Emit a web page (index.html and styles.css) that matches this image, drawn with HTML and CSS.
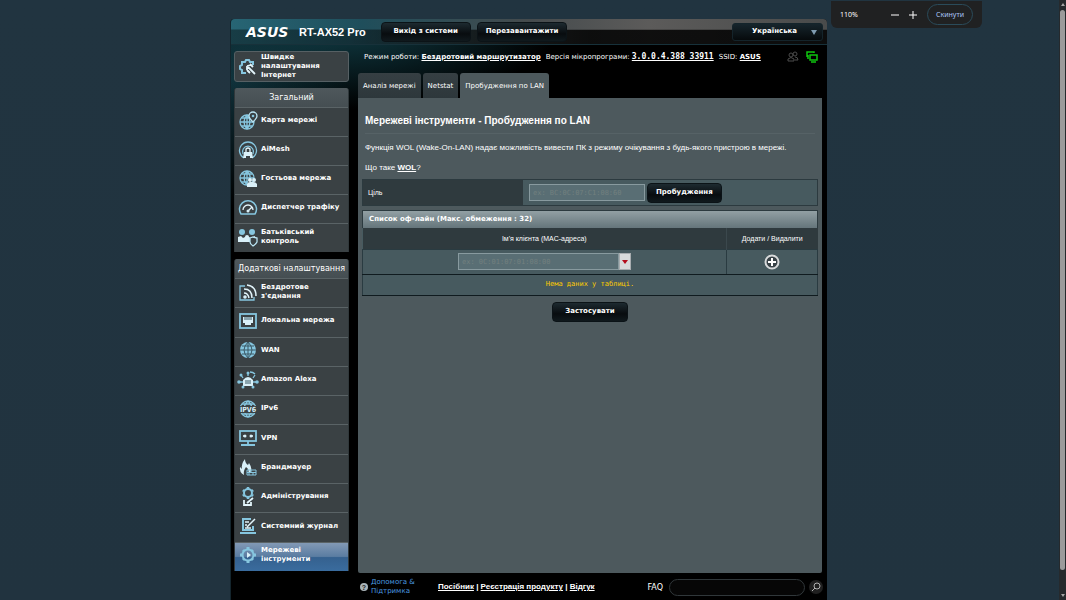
FILE: index.html
```html
<!DOCTYPE html>
<html lang="uk">
<head>
<meta charset="utf-8">
<title>ASUS RT-AX52 Pro - Пробудження по LAN</title>
<link rel="stylesheet" href="styles.css">
</head>
<body>
<div class="router">
  <header class="topbar">
    <svg class="logo" width="46" height="14" viewBox="0 0 46 14" role="img" aria-label="ASUS"><text x="1" y="12">ASUS</text></svg>
    <span class="model">RT-AX52 Pro</span>
    <button class="btn btn-top">Вихід з системи</button>
    <button class="btn btn-top">Перезавантажити</button>
    <span class="lang">
      <select aria-label="Мова"><option>Українська</option></select>
    </span>
  </header>

  <div class="columns">
    <nav class="sidebar">
      <a class="quick" href="#">
        <svg class="icon" viewBox="0 0 18 18"><path class="s" d="M14 7V4h-3L10 2H7L6 4H3v3L1 8v3l2 1v3h4" stroke-width="2"/><path class="w" d="M8 8l8 8M8 12l3 3M11 6l3 3M8 8l4-1M8 8v4" stroke-width="1.800"/></svg>
        <span>Швидке налаштування Інтернет</span>
      </a>
      <section class="group">
        <h2>Загальний</h2>
        <ul>
          <li><a href="#"><svg class="icon" viewBox="0 0 18 18"><circle class="s" cx="8" cy="10" r="7"/><path class="s" d="M1 10h14M8 3v14M3 6h10M3 14h10M8 3Q2 10 8 17M8 3q6 7 0 14"/><path class="pin" d="M14 10Q10 6 10 4a4 4 0 0 1 8 0q0 2-4 6z"/><circle class="f" cx="14" cy="4" r="1.300"/></svg><span>Карта мережі</span></a></li>
          <li><a href="#"><svg class="icon" viewBox="0 0 18 18"><path class="s" d="M5 17A8.500 8.500 0 1 1 13 17"/><path class="s" d="M4 13a5.500 5.500 0 1 1 10 0"/><path class="w" d="M7 11V8q2-2 4 0v3"/><path class="wf" d="M5 11h8l1 6h-3v-2H7v2H4z"/></svg><span>AiMesh</span></a></li>
          <li><a href="#"><svg class="icon" viewBox="0 0 18 18"><circle class="s" cx="8" cy="8" r="7"/><path class="s" d="M1 8h14M8 1v14M3 4h10M3 12h6M8 1Q2 8 8 15M8 1q5 5 2 10"/><path class="wf" d="M8 17v-3q1-2 3-2h3q3 0 4 2v3z"/><circle class="wf" cx="11" cy="10" r="2"/><circle class="wf" cx="15" cy="10" r="2"/></svg><span>Гостьова мережа</span></a></li>
          <li><a href="#"><svg class="icon" viewBox="0 0 18 18"><path class="s" d="M2 15A8.500 8.500 0 1 1 16 15z" stroke-width="1.500"/><path class="w" d="M4 11a5 5 0 0 1 10 0M9 12l4-4"/><circle class="wf" cx="9" cy="12" r="1.500"/></svg><span>Диспетчер трафіку</span></a></li>
          <li><a href="#"><svg class="icon" viewBox="0 0 18 18"><circle class="f" cx="3" cy="4" r="3"/><circle class="f" cx="13" cy="4" r="3"/><path class="wf" d="M-1 14V9l3-1 2 2 4-2 4 2 4-2v6z"/><circle class="wf" cx="8" cy="9" r="2"/><path class="pin" d="M11 10l3-1 4 1v4q-1 2-4 4-3-2-3-4z"/></svg><span>Батьківський контроль</span></a></li>
        </ul>
      </section>
      <section class="group">
        <h2>Додаткові налаштування</h2>
        <ul class="long">
          <li><a href="#"><svg class="icon" viewBox="0 0 18 18"><path class="s" d="M6 3H1v14h14v-3"/><path class="w" d="M5 6q8 0 8 9M5 10q4 0 5 5M8 2q9 1 9 11" stroke-width="1.500"/><circle class="wf" cx="6" cy="14" r="1.800"/></svg><span>Бездротове з'єднання</span></a></li>
          <li><a href="#"><svg class="icon" viewBox="0 0 18 18"><rect class="s" x="1" y="2" width="16" height="14" stroke-width="1.800"/><path class="wf" d="M4 5h10v6h-2v2H6v-2H4z"/><path class="d" d="M6 5v3M8 5v3M10 5v3M12 5v3"/></svg><span>Локальна мережа</span></a></li>
          <li><a href="#"><svg class="icon" viewBox="0 0 18 18"><circle class="f" cx="9" cy="9" r="8"/><path class="d" d="M1 9h16M9 1v16M3 5h12M3 13h12M9 1Q1 9 9 17M9 1q8 8 0 16"/></svg><span>WAN</span></a></li>
          <li><a href="#"><svg class="icon" viewBox="0 0 18 18"><path class="wf" d="M4 15V9q5-6 10 0v6z"/><path class="d" d="M6 10h6M6 12h6"/><path class="s" d="M9 5V2M4 7L2 4M14 7l2-3M4 11H0M14 11h4M11 1q3 0 5 2"/><circle class="f" cx="9" cy="2" r="1.500"/><circle class="f" cx="2" cy="4" r="1.500"/><circle class="f" cx="0" cy="11" r="1.800"/><circle class="f" cx="18" cy="11" r="1.800"/><circle class="f" cx="4" cy="16" r="1.500"/><circle class="f" cx="14" cy="16" r="1.500"/></svg><span>Amazon Alexa</span></a></li>
          <li><a href="#"><svg class="icon" viewBox="0 0 18 18"><circle class="s" cx="9" cy="9" r="8"/><path class="s" d="M3 4h12M3 14h12M9 1Q1 9 9 17M9 1q8 8 0 16"/><rect class="plate" y="6" width="18" height="7"/><text class="tag" x="9" y="12">IPV6</text></svg><span>IPv6</span></a></li>
          <li><a href="#"><svg class="icon" viewBox="0 0 18 18"><rect class="s" x="1" y="2" width="16" height="10" stroke-width="1.800"/><path class="s" d="M9 12v4M2 16h14" stroke-width="1.800"/><path class="w" d="M4 7h3M11 7h3"/><circle class="wf" cx="6" cy="7" r="1.500"/><circle class="wf" cx="12" cy="7" r="1.500"/></svg><span>VPN</span></a></li>
          <li><a href="#"><svg class="icon" viewBox="0 0 18 18"><path class="wf" d="M5 17Q0 14 1 9q1 1 2 2Q2 6 6 1q0 4 3 6l1-2q4 6 1 10H9q2-3-2-6-3 4-2 8z"/><path class="s" d="M8 12h9v5H8zM8 14.500h9M12 12v2.500M10 15v2M14 15v2" stroke-width="1"/></svg><span>Брандмауер</span></a></li>
          <li><a href="#"><svg class="icon" viewBox="0 0 18 18"><circle class="s" cx="9" cy="5" r="4" stroke-width="2"/><path class="s" d="M9-1v2M9 9v2M4 2l1 1M14 2l-1 1M4 8l1-1M14 8l-1-1" stroke-width="2.500"/><path class="w" d="M5 12v5h7v-3M8 15l6-5" stroke-width="1.800"/></svg><span>Адміністрування</span></a></li>
          <li><a href="#"><svg class="icon" viewBox="0 0 18 18"><path class="s" d="M12 2H4v11h10V9M1 16h16" stroke-width="2"/><path class="w" d="M8 10l8-8M6 5h4M6 8h2M6 11h6" stroke-width="1.500"/></svg><span>Системний журнал</span></a></li>
          <li class="active"><a href="#"><svg class="icon" viewBox="0 0 18 18"><circle class="s" cx="9" cy="9" r="5.500" stroke-width="2"/><path class="s" d="M9 1v3M9 14v3M1 9h3M14 9h3M4 4l1 1M14 4l-1 1M4 14l1-1M14 14l-1-1" stroke-width="3"/><path class="wf" d="M8 6l4 3-4 3z"/></svg><span>Мережеві інструменти</span></a></li>
        </ul>
      </section>
    </nav>

    <main class="content">
      <div class="status">
        <span>Режим роботи: <a href="#">Бездротовий маршрутизатор</a></span>
        <span>Версія мікропрограми: <a class="version" href="#">3.0.0.4.388_33911</a></span>
        <span>SSID: <a href="#">ASUS</a></span>
        <span class="status-icons">
          <svg width="12" height="12" viewBox="0 0 12 12"><g class="dim"><circle cx="4" cy="4" r="2"/><circle cx="8" cy="3" r="2"/><path d="M1 10V8q3-3 6 0v2zM8 6q3 0 3 3H8"/></g></svg>
          <svg width="12" height="12" viewBox="0 0 12 12"><path class="green" d="M4 4h7v5H4zM5 11h5M2 8V4M1 6V1h7v1"/></svg>
        </span>
      </div>
      <div class="tabs">
        <a href="#">Аналіз мережі</a>
        <a href="#">Netstat</a>
        <a class="current" href="#">Пробудження по LAN</a>
      </div>
      <div class="panel">
        <h1>Мережеві інструменти - Пробудження по LAN</h1>
        <p>Функція WOL (Wake-On-LAN) надає можливість вивести ПК з режиму очікування з будь-якого пристрою в мережі.</p>
        <p class="hint">Що таке <a href="#">WOL</a>?</p>
        <div class="target">
          <label for="target">Ціль</label>
          <div class="target-value">
            <input class="mac" id="target" type="text" placeholder="ex: BC:0C:07:C1:08:60">
            <button class="btn">Пробудження</button>
          </div>
        </div>
        <table class="clients">
          <caption>Список оф-лайн (Макс. обмеження : 32)</caption>
          <thead>
            <tr><th><label for="client">Ім'я клієнта (MAC-адреса)</label></th><th class="action">Додати / Видалити</th></tr>
          </thead>
          <tbody>
            <tr>
              <td><span class="combo"><input class="mac" id="client" type="text" placeholder="ex: 0C:01:07:01:08:00"><button class="arrow" aria-label="Показати клієнтів"></button></span></td>
              <td><button class="add" aria-label="Додати"><svg width="16" height="16" viewBox="0 0 16 16"><circle cx="8" cy="8" r="6.500"/><path d="M8 4v8M4 8h8"/></svg></button></td>
            </tr>
            <tr class="empty"><td colspan="2">Нема даних у таблиці.</td></tr>
          </tbody>
        </table>
        <button class="btn apply">Застосувати</button>
      </div>
    </main>
  </div>

  <footer class="footer">
    <svg class="help-icon" width="8" height="8" viewBox="0 0 8 8"><circle cx="4" cy="4" r="4"/><text x="4" y="6.500">?</text></svg>
    <a class="help" href="#">Допомога &amp; Підтримка</a>
    <span class="links"><a href="#">Посібник</a> | <a href="#">Реєстрація продукту</a> | <a href="#">Відгук</a></span>
    <label for="faq">FAQ</label>
    <input id="faq" type="text">
    <button class="search" aria-label="Пошук"><svg width="14" height="14" viewBox="0 0 14 14"><circle cx="8" cy="6" r="3"/><path d="M6 8l-3 3"/></svg></button>
  </footer>
</div>

<div class="zoom">
  <span class="zoom-level">110%</span>
  <button aria-label="Зменшити"><svg width="8" height="8" viewBox="0 0 8 8"><path d="M0 4h8"/></svg></button>
  <button aria-label="Збільшити"><svg width="8" height="8" viewBox="0 0 8 8"><path d="M0 4h8M4 0v8"/></svg></button>
  <button class="reset">Скинути</button>
</div>
<div class="scrollbar"><i class="up"></i><i class="thumb"></i><i class="down"></i></div>
</body>
</html>
```
FILE: styles.css
```css
* { box-sizing: border-box; }
html { background: #21333f; }
body {
  margin: 0;
  min-height: 100vh;
  padding: 19px 9px 0 0;
  display: flex;
  justify-content: center;
  background: linear-gradient(#213440, #21333f);
  color: #fff;
  font: 7px/9px "DejaVu Sans", sans-serif;
}
a { color: inherit; }
button, input, select { font: inherit; color: inherit; margin: 0; }
button { cursor: pointer; }
h1, h2, p, ul { margin: 0; padding: 0; }

.router {
  width: 100%;
  max-width: 597px;
  display: flex;
  flex-direction: column;
  border-left: 1px solid #14252d;
  border-radius: 4px 4px 0 0;
  background:
    radial-gradient(ellipse 220px 90px at 110px 0, #12414b, #12414b00),
    radial-gradient(ellipse 120px 130px at 0 60px, #103039, #10303900),
    #000;
}

.topbar {
  display: flex;
  align-items: center;
  height: 26px;
  padding: 0 4px 0 14px;
  border-bottom: 1px solid #17313a;
  border-radius: 4px 4px 0 0;
  background:
    linear-gradient(90deg, #0000 20%, #000b 60%) 0 11px no-repeat,
    linear-gradient(#0000 10px, #0006 11px),
    linear-gradient(90deg, #276574, #1f4e5b 22%, #454b4d 50%, #5c5b5a 70%, #494b4b);
}
.logo text { font: italic bold 14px "DejaVu Sans", sans-serif; fill: #fff; }
.model { margin: 0 15px 0 8px; font: bold 11px/14px "Liberation Sans", sans-serif; white-space: nowrap; }
.btn {
  height: 20px;
  padding: 0 8px;
  border: 1px solid #0b1317;
  border-radius: 4px;
  background: linear-gradient(#1d2a30, #080c0f 60%, #10191d);
  font-weight: bold;
  white-space: nowrap;
}
.btn-top { margin-right: 6px; min-width: 90px; }
.lang { position: relative; margin-left: auto; width: 91px; }
.lang select {
  width: 100%;
  height: 18px;
  padding: 0 14px 0 8px;
  border: 1px solid #14242b;
  border-radius: 3px;
  appearance: none;
  background: linear-gradient(#16252c, #060a0c);
  font-weight: bold;
  text-align-last: center;
}
.lang::after {
  content: "";
  position: absolute;
  right: 6px;
  top: 7px;
  border: 3px solid transparent;
  border-top: 5px solid #7f9bb0;
  border-bottom: 0;
}

.columns { display: flex; gap: 9px; padding: 0 5px 0 3px; }
.sidebar { flex: 0 0 115px; min-width: 0; padding-top: 6px; font-weight: bold; }
.sidebar a { display: flex; align-items: center; gap: 4px; padding: 0 2px 3px 4px; text-decoration: none; }
.sidebar a span { flex: 1; min-width: 0; }
.sidebar .quick {
  height: 31px;
  padding-bottom: 0;
  border: 1px solid #566064;
  border-radius: 3px;
  background: #3a4144;
}
.group { margin-top: 6px; border-radius: 3px 3px 0 0; overflow: hidden; background: #3a4144; border: 1px solid #30383b; border-width: 0 1px; }
.group + .group { margin-top: 7px; }
.group h2 { height: 19px; background: linear-gradient(#4f585c, #454e52); font-size: 8px; line-height: 20px; font-weight: normal; text-align: center; white-space: nowrap; }
.group ul { list-style: none; display: grid; grid-auto-rows: 1fr; min-height: 145px; }
.group .long { min-height: 293px; }
.group li { display: grid; border-top: 1px solid #5a6366; }
.group .active { background: linear-gradient(#8299b5, #5b7da2 48%, #35618f 52%, #3a6c9e); }
.icon { flex: none; width: 18px; height: 18px; overflow: visible; stroke-width: 1.300; }
.s, .w, .d { fill: none; stroke: #86c6df; }
.w { stroke: #e2f4fa; }
.d { stroke: #3b5965; stroke-width: 1; }
.f { fill: #86c6df; }
.wf { fill: #d9f0f8; }
.pin { fill: #3a4144; stroke: #b9e4f3; }
.plate { fill: #3a4144; }
.tag { font: bold 7px "DejaVu Sans Condensed", "DejaVu Sans", sans-serif; fill: #d9f0f8; text-anchor: middle; }

.content { flex: 1; min-width: 0; display: flex; flex-direction: column; }
.status { display: flex; align-items: center; gap: 5px; height: 28px; padding: 0 4px 4px 6px; white-space: nowrap; }
.status a { font-weight: bold; }
.status .version { font-family: "DejaVu Sans Mono", monospace; font-size: 8px; }
.status-icons { margin-left: auto; display: flex; gap: 7px; }
.dim { fill: none; stroke: #4c4c4c; }
.green { fill: none; stroke: #0fc50f; stroke-width: 1.500; }
.tabs { display: flex; gap: 2px; height: 25px; }
.tabs a {
  padding: 0 5px;
  border-radius: 3px 3px 0 0;
  background: linear-gradient(#363f43, #2d373b);
  line-height: 27px;
  text-decoration: none;
  white-space: nowrap;
}
.tabs .current { background: #4d595d; }
.panel {
  flex: 1;
  display: flex;
  flex-direction: column;
  padding: 0 4px;
  border-radius: 0 0 2px 2px;
  background: #4d595d;
  font-family: "Liberation Sans", sans-serif;
}
.panel h1 { margin: 0 3px 9px; padding: 15px 0 5px; border-bottom: 1px solid #566266; font-size: 10px; line-height: 15px; }
.panel p { margin: 0 3px 10px; font-size: 8px; line-height: 10px; }
.panel .hint { margin-bottom: 6px; }
.panel p a { font-weight: bold; }
.target { display: grid; grid-template-columns: 160px 1fr; min-height: 27px; margin-bottom: 4px; border: 1px solid #2c3a3f; background: #475a5f; }
.target label { display: flex; align-items: center; padding-left: 5px; background: #2f3a3e; }
.target-value { display: flex; align-items: center; gap: 2px; padding-left: 6px; }
.mac {
  width: 116px;
  height: 17px;
  padding: 0 3px;
  border: 1px solid #889a9f;
  background: #596e74;
  font: 7px "DejaVu Sans Mono", monospace;
}
.mac::placeholder { color: #72807f; opacity: 1; }
.panel .btn { font-family: "DejaVu Sans", sans-serif; }

.clients { width: 100%; border-collapse: collapse; text-align: center; background: #475a5f; table-layout: fixed; }
.clients caption {
  height: 18px;
  padding-left: 6px;
  border: 1px solid #2c3a3f;
  border-bottom: 0;
  background: linear-gradient(#92a0a4, #65757b);
  font: bold 7px/17px "DejaVu Sans", sans-serif;
  text-align: left;
}
.clients th { height: 21px; padding: 0; background: #2f3a3e; font-weight: normal; }
.clients .action { width: 91px; border-left: 1px solid #3b484d; }
.clients td { height: 25px; padding: 0; border: 1px solid #2a3b41; border-bottom-color: #101b1f; }
.clients .empty td { height: 21px; color: #fc0; font-family: "DejaVu Sans Mono", monospace; }
.combo { display: inline-flex; vertical-align: middle; }
.combo .mac { width: 161px; }
.arrow { width: 12px; height: 17px; padding: 0; border: 1px solid #a8adb0; background: #d8dadb; display: grid; place-items: center; }
.arrow::after { content: ""; border: 3px solid transparent; border-top: 4px solid #b30c1c; border-bottom: 0; }
.add { display: inline-flex; padding: 0; border: 0; background: none; vertical-align: middle; }
.add circle { fill: #384247; stroke: #d7d9da; stroke-width: 2; }
.add path { fill: none; stroke: #fff; stroke-width: 2; }
.panel .apply { align-self: center; min-width: 76px; margin: 6px 0 251px; }

.footer { display: flex; align-items: center; height: 27px; padding: 2px 4px 0 129px; }
.help-icon circle { fill: #aab4b8; }
.help-icon text { font: bold 7px "Liberation Sans", sans-serif; fill: #222; text-anchor: middle; }
.help { width: 50px; margin: 0 17px 0 3px; color: #4b9be0; text-decoration: none; }
.links { font: bold 8px/10px "Liberation Sans", sans-serif; white-space: nowrap; }
.footer label { margin: 0 6px 0 auto; font-size: 8px; }
#faq { width: 136px; height: 17px; padding: 0 8px; border: 1px solid #30373a; border-radius: 9px; background: #060606; }
.search { display: flex; margin-left: 4px; padding: 0; border: 0; border-radius: 7px; background: #202020; }
.search svg { fill: none; stroke: #b0b0b0; }

.zoom {
  position: absolute;
  top: 1px;
  right: 84px;
  display: flex;
  align-items: center;
  width: 151px;
  height: 27px;
  padding: 0 9px;
  border-radius: 0 0 6px 6px;
  background: #202122;
  font: 7px/9px "Noto Sans", sans-serif;
}
.zoom-level { margin-right: auto; }
.zoom button { display: flex; padding: 0; border: 0; margin-right: 10px; background: none; }
.zoom svg { stroke: #fff; fill: none; }
.zoom .reset { margin: 0; height: 21px; align-items: center; justify-content: center; width: 46px; border: 1px solid #2a4b5a; border-radius: 11px; color: #a9c4f5; }
.scrollbar { position: fixed; inset: 0 0 0 auto; width: 7px; padding: 3px 1px; display: flex; flex-direction: column; align-items: center; gap: 4px; background: #262a2d; }
.thumb { flex: 1; width: 5px; margin-bottom: 20px; border-radius: 3px; background: #9b9b9b; }
.up, .down { border: 2px solid transparent; border-bottom: 3px solid #a5a5a5; border-top: 0; }
.down { border-top: 3px solid #a5a5a5; border-bottom: 0; }
```
